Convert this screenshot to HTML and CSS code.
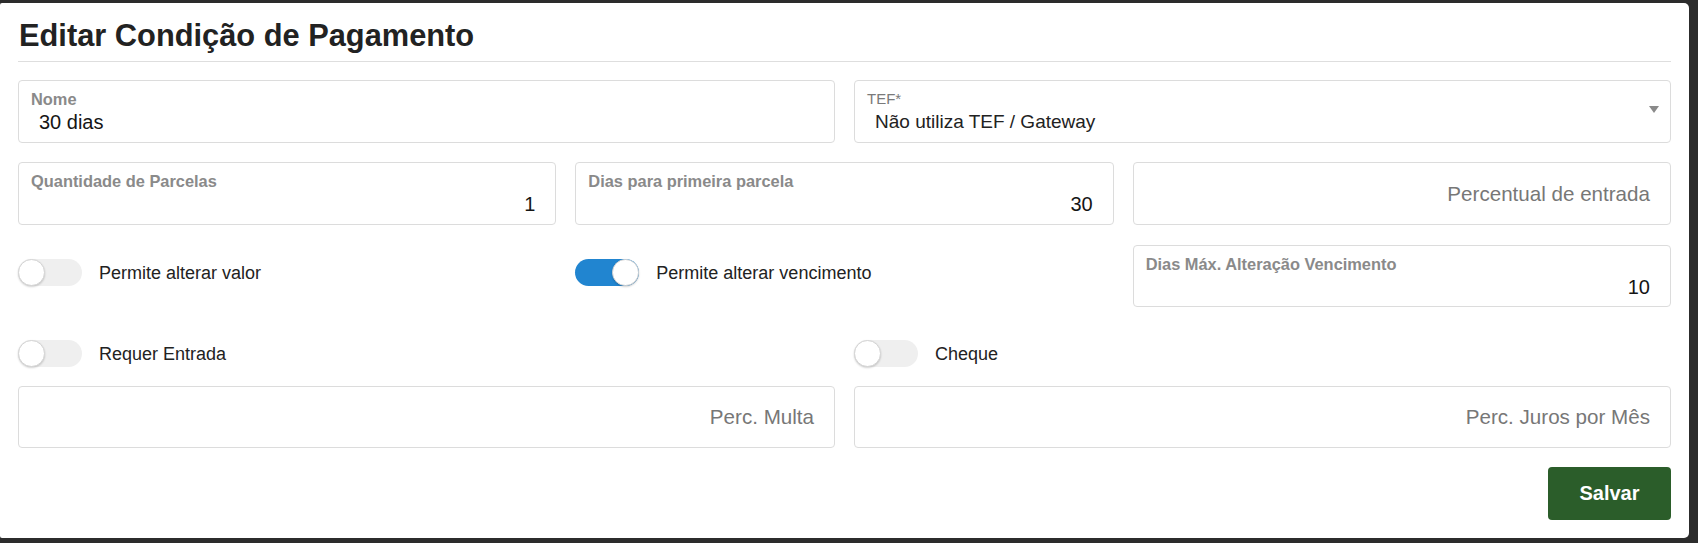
FILE: index.html
```html
<!DOCTYPE html>
<html lang="pt-BR">
<head>
<meta charset="utf-8">
<title>Editar Condição de Pagamento</title>
<link rel="stylesheet" href="styles.css">
</head>
<body>
<div class="card">
  <h1 class="title">Editar Condição de Pagamento</h1>
  <div class="form">
    <div class="row halves">
      <div class="field">
        <span class="label">Nome</span>
        <span class="value">30 dias</span>
      </div>
      <div class="field select">
        <span class="label thin">TEF*</span>
        <span class="value sel">Não utiliza TEF / Gateway</span>
        <span class="caret"></span>
      </div>
    </div>
    <div class="row thirds">
      <div class="field">
        <span class="label">Quantidade de Parcelas</span>
        <span class="value right">1</span>
      </div>
      <div class="field">
        <span class="label">Dias para primeira parcela</span>
        <span class="value right">30</span>
      </div>
      <div class="field empty">
        <span class="placeholder">Percentual de entrada</span>
      </div>
    </div>
    <div class="row thirds toggles-row r3">
      <div class="toggle-cell">
        <span class="toggle"><span class="knob"></span></span>
        <span class="toggle-text">Permite alterar valor</span>
      </div>
      <div class="toggle-cell">
        <span class="toggle on"><span class="knob"></span></span>
        <span class="toggle-text">Permite alterar vencimento</span>
      </div>
      <div class="field short">
        <span class="label">Dias Máx. Alteração Vencimento</span>
        <span class="value right">10</span>
      </div>
    </div>
    <div class="row halves toggles-row r4">
      <div class="toggle-cell">
        <span class="toggle"><span class="knob"></span></span>
        <span class="toggle-text">Requer Entrada</span>
      </div>
      <div class="toggle-cell">
        <span class="toggle"><span class="knob"></span></span>
        <span class="toggle-text">Cheque</span>
      </div>
    </div>
    <div class="row halves">
      <div class="field empty short">
        <span class="placeholder">Perc. Multa</span>
      </div>
      <div class="field empty short">
        <span class="placeholder">Perc. Juros por Mês</span>
      </div>
    </div>
    <div class="actions">
      <button class="btn" type="button">Salvar</button>
    </div>
  </div>
</div>
</body>
</html>
```
FILE: styles.css
```css
* { box-sizing: border-box; }
html, body { margin: 0; padding: 0; }
body {
  background: #2c2c2c;
  font-family: "Liberation Sans", Arial, sans-serif;
  padding-top: 3px;
  width: 1698px;
  height: 543px;
  overflow: hidden;
}
.card {
  width: 1689px;
  background: #fff;
  border-radius: 2px 5px 5px 2px;
  padding: 15px 18px 18px 18px;
}
.title {
  margin: 0;
  font-size: 30.8px;
  line-height: 36px;
  font-weight: bold;
  color: #222;
  padding: 0 0 7px 1px;
  border-bottom: 1px solid #dedede;
}
.form {
  margin-top: 18px;
  display: flex;
  flex-direction: column;
  gap: 19px;
}
.row { display: grid; gap: 19px; }
.halves { grid-template-columns: 1fr 1fr; }
.thirds { grid-template-columns: 1fr 1fr 1fr; align-items: start; }
.r3 { margin-top: 1px; }
.field {
  position: relative;
  height: 63px;
  border: 1px solid #dcdcdc;
  border-radius: 4px;
  padding: 9px 20px 8px 12px;
  display: flex;
  flex-direction: column;
}
.field.short { height: 62px; }
.label {
  display: block;
  font-size: 16.4px;
  line-height: 18px;
  font-weight: bold;
  color: #8a8a8a;
}
.label.thin {
  font-weight: normal;
  font-size: 15px;
  color: #7a7a7a;
}
.value {
  display: block;
  margin-top: 2px;
  font-size: 20px;
  line-height: 24px;
  color: #151515;
  padding-left: 8px;
}
.value.sel { font-size: 19px; color: #222; }
.value.right { text-align: right; padding-left: 0; }
.caret {
  position: absolute;
  right: 11px;
  top: 25px;
  width: 0;
  height: 0;
  border-left: 5px solid transparent;
  border-right: 5px solid transparent;
  border-top: 7px solid #8a8a8a;
}
.field.empty {
  flex-direction: row;
  align-items: center;
  justify-content: flex-end;
  padding-top: 0;
  padding-bottom: 0;
}
.placeholder {
  font-size: 20.6px;
  color: #777;
}
.toggle-cell {
  display: flex;
  align-items: center;
  gap: 17px;
  padding-top: 14px;
}
.toggle {
  position: relative;
  display: block;
  width: 64px;
  height: 27px;
  border-radius: 14px;
  background: #efefef;
  flex: none;
}
.toggle .knob {
  position: absolute;
  top: 0;
  left: 0;
  width: 27px;
  height: 27px;
  border-radius: 50%;
  background: #fff;
  border: 1px solid #d4d4d4;
  box-shadow: 0 1px 2px rgba(0,0,0,0.18);
}
.toggle.on { background: #2185d0; }
.toggle.on .knob { left: 37px; }
.toggle-text {
  font-size: 18px;
  color: #222;
  line-height: 22px;
}
.actions {
  display: flex;
  justify-content: flex-end;
  margin-top: 0;
}
.btn {
  width: 123px;
  height: 53px;
  border: none;
  border-radius: 4px;
  background: #2b5d2a;
  color: #fff;
  font-family: "Liberation Sans", Arial, sans-serif;
  font-size: 20px;
  font-weight: bold;
  padding: 0;
}
```
